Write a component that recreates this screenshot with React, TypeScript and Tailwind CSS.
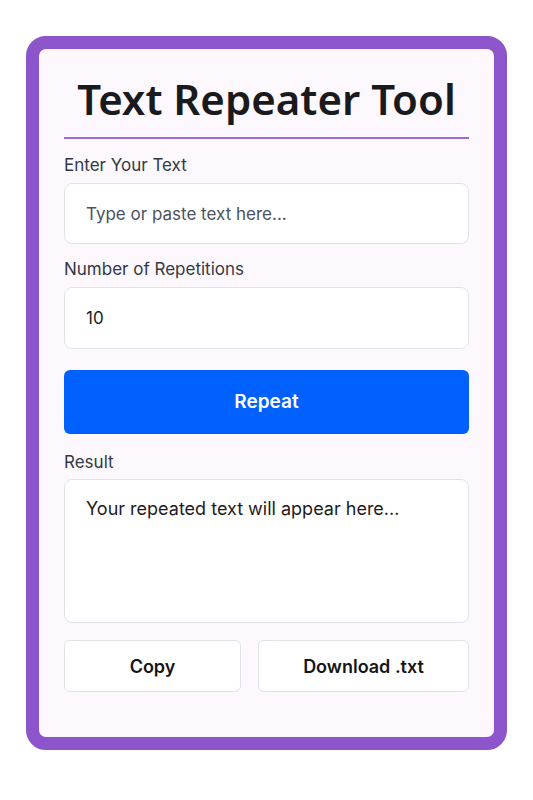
import React, { useState } from 'react';

export default function App() {
  const [text, setText] = useState('');
  const [count, setCount] = useState('10');
  const [result, setResult] = useState('');

  const repeat = () => {
    const n = Math.max(0, parseInt(count, 10) || 0);
    setResult(Array(n).fill(text).join('\n'));
  };

  return (
    <div className="min-h-screen bg-white pt-[36px] px-[26px] font-['Inter','Liberation_Sans',sans-serif]">
      <div className="w-[481px] rounded-[20px] border-[13px] border-[#8d55cc] bg-[#fcf8fd] px-[12px] pt-[24px] pb-[45px] overflow-hidden">
        <div className="px-[13px]">
          <h1 className="text-center text-[42px] leading-[52px] font-semibold text-[#1a1a1c] font-['Noto_Sans','Open_Sans',sans-serif]">
            Text Repeater Tool
          </h1>
          <div className="mt-[12px] h-[2px] bg-[#a466d6]" />

          <label className="block mt-[14px] text-[17px] leading-[24px] text-[#323844]">Enter Your Text</label>
          <input
            value={text}
            onChange={e => setText(e.target.value)}
            placeholder="Type or paste text here..."
            className="mt-[6px] block w-full h-[61px] rounded-[8px] border border-[#e1e3ea] bg-white px-[21px] text-[17px] text-[#1c1c1e] placeholder:text-[#4b5360] outline-none"
          />

          <label className="block mt-[13px] text-[17px] leading-[24px] text-[#323844]">Number of Repetitions</label>
          <input
            value={count}
            onChange={e => setCount(e.target.value)}
            className="mt-[6px] block w-full h-[62px] rounded-[8px] border border-[#e1e3ea] bg-white px-[21px] text-[17px] text-[#1c1c1e] outline-none"
          />

          <button
            onClick={repeat}
            className="mt-[21px] block w-full h-[64px] rounded-[6px] bg-[#0061fe] text-white text-[19px] font-semibold"
          >
            Repeat
          </button>

          <label className="block mt-[16px] text-[17px] leading-[24px] text-[#323844]">Result</label>
          <textarea
            readOnly
            value={result}
            placeholder="Your repeated text will appear here..."
            className="mt-[5px] block w-full h-[144px] resize-none rounded-[8px] border border-[#e1e3ea] bg-white px-[21px] py-[16px] text-[18px] leading-[26px] text-[#1c1c1e] placeholder:text-[#1c1c1e] outline-none"
          />

          <div className="mt-[17px] flex gap-[17px]">
            <button
              onClick={() => navigator.clipboard?.writeText(result)}
              className="w-[177px] h-[52px] rounded-[6px] border border-[#e1e3ea] bg-white text-[18px] font-semibold text-[#151517]"
            >
              Copy
            </button>
            <button className="flex-1 h-[52px] rounded-[6px] border border-[#e1e3ea] bg-white text-[18px] font-semibold text-[#151517]">
              Download .txt
            </button>
          </div>
        </div>
      </div>
    </div>
  );
}
